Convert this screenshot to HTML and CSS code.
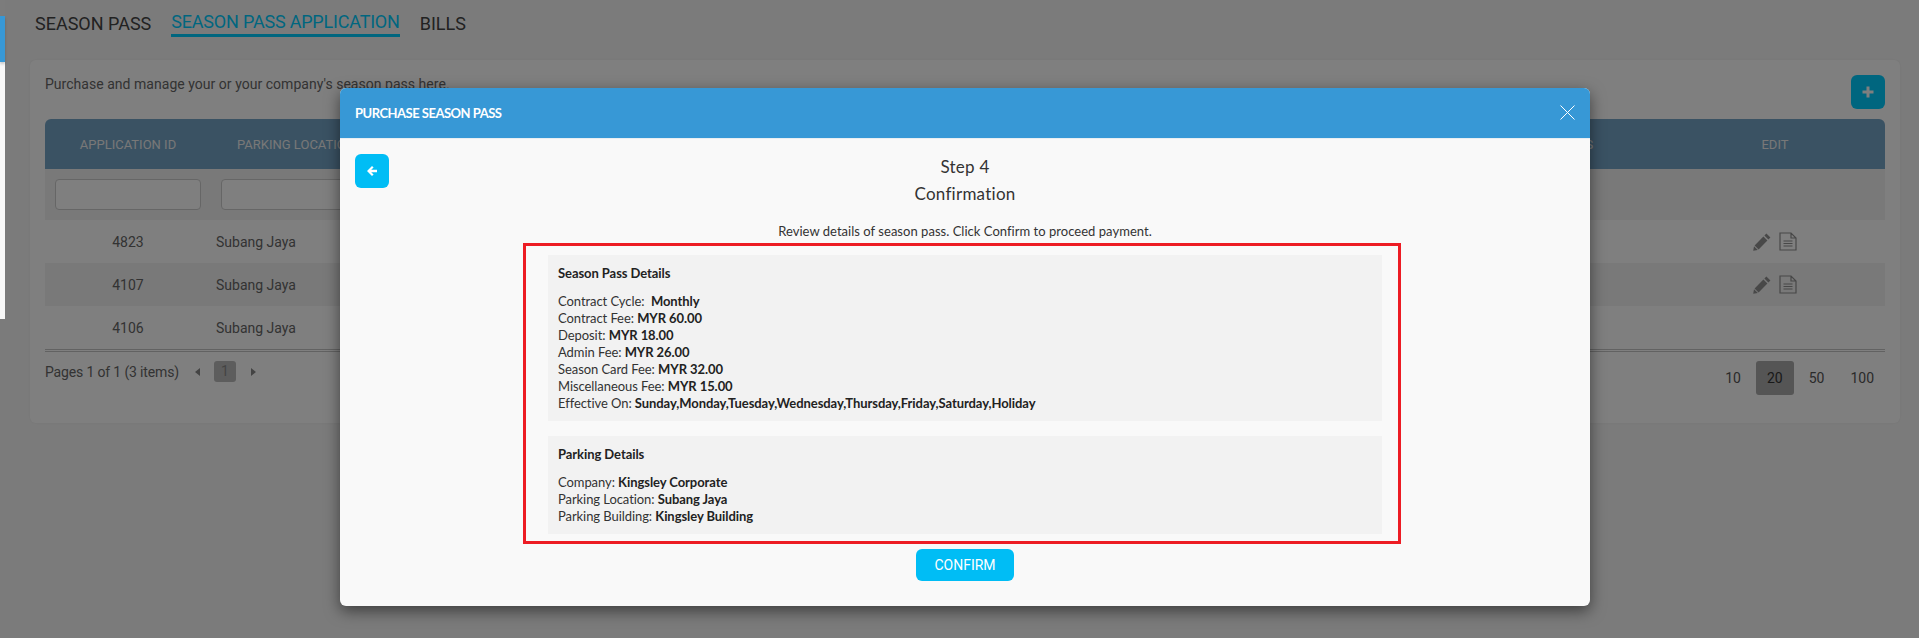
FILE: index.html
```html
<!DOCTYPE html>
<html lang="en">
<head>
<meta charset="utf-8">
<title>Season Pass Application</title>
<link rel="stylesheet" href="styles.css">
</head>
<body>
<div class="page">
  <nav class="tabs">
    <a class="tab">SEASON PASS</a>
    <a class="tab tab-active">SEASON PASS APPLICATION</a>
    <a class="tab">BILLS</a>
  </nav>
  <section class="card">
    <div class="card-top">
      <p class="intro">Purchase and manage your or your company's season pass here.</p>
      <button class="add-btn" aria-label="Add"><svg width="12" height="12" viewBox="0 0 12 12"><path d="M4.5 0.5h3v4h4v3h-4v4h-3v-4h-4v-3h4z" fill="#fff"/></svg></button>
    </div>
    <table class="grid">
      <colgroup><col class="c1"><col class="c2"><col><col class="c4"><col class="c5"></colgroup>
      <thead>
        <tr class="head"><th>APPLICATION ID</th><th>PARKING LOCATION</th><th></th><th>STATUS</th><th>EDIT</th></tr>
        <tr class="filters"><td><input class="filter"></td><td><input class="filter"></td><td></td><td></td><td></td></tr>
      </thead>
      <tbody>
        <tr><td class="num">4823</td><td>Subang Jaya</td><td></td><td></td><td class="edit">
          <svg class="ic" width="18" height="18" viewBox="0 0 18 18"><path d="M13.4 0.6l4 4-2 2-4-4zM10.4 3.6l4 4-8.8 8.8-4-4zM1 13.2l3.8 3.8-4.6 0.8z" fill="#909090"/></svg>
          <svg class="ic" width="18" height="19" viewBox="0 0 18 19"><path d="M1 1h11l5 5v12H1zM12 1v5h5M4.5 9h9M4.5 11.5h9M4.5 14h9" fill="none" stroke="#909090" stroke-width="1.2"/></svg>
        </td></tr>
        <tr class="alt"><td class="num">4107</td><td>Subang Jaya</td><td></td><td></td><td class="edit">
          <svg class="ic" width="18" height="18" viewBox="0 0 18 18"><path d="M13.4 0.6l4 4-2 2-4-4zM10.4 3.6l4 4-8.8 8.8-4-4zM1 13.2l3.8 3.8-4.6 0.8z" fill="#909090"/></svg>
          <svg class="ic" width="18" height="19" viewBox="0 0 18 19"><path d="M1 1h11l5 5v12H1zM12 1v5h5M4.5 9h9M4.5 11.5h9M4.5 14h9" fill="none" stroke="#909090" stroke-width="1.2"/></svg>
        </td></tr>
        <tr><td class="num">4106</td><td>Subang Jaya</td><td></td><td></td><td></td></tr>
      </tbody>
    </table>
    <div class="pager">
      <div class="pager-left">
        <span class="pager-info">Pages 1 of 1 (3 items)</span>
        <span class="arrow arrow-l"></span>
        <span class="page-box">1</span>
        <span class="arrow arrow-r"></span>
      </div>
      <div class="sizes">
        <span class="size">10</span>
        <span class="size size-on">20</span>
        <span class="size">50</span>
        <span class="size">100</span>
      </div>
    </div>
  </section>
</div>

<div class="overlay"></div>

<div class="edge">
  <div class="edge-dim"></div>
  <div class="edge-blue"></div>
  <div class="edge-light"></div>
</div>

<div class="modal">
  <header class="modal-head">
    <h2 class="modal-title">PURCHASE SEASON PASS</h2>
    <svg class="close" width="15" height="15" viewBox="0 0 15 15"><path d="M0.5 0.5l14 14M14.5 0.5l-14 14" stroke="#fff" stroke-width="1" fill="none"/></svg>
  </header>
  <div class="modal-body">
    <div class="step-row">
      <button class="back-btn" aria-label="Back"><svg width="12" height="12" viewBox="0 0 12 12"><path d="M6 1l1.6 1.6L5.2 4.8H11v2.4H5.2l2.4 2.2L6 11 1 6z" fill="#fff"/></svg></button>
      <div class="step-text">
        <div class="step-line">Step 4</div>
        <div class="step-line">Confirmation</div>
      </div>
      <div class="step-pad"></div>
    </div>
    <p class="review">Review details of season pass. Click Confirm to proceed payment.</p>
    <div class="redbox">
      <div class="panel">
        <h3 class="panel-title">Season Pass Details</h3>
        <div class="line">Contract Cycle:&nbsp; <b>Monthly</b></div>
        <div class="line">Contract Fee: <b>MYR 60.00</b></div>
        <div class="line">Deposit: <b>MYR 18.00</b></div>
        <div class="line">Admin Fee: <b>MYR 26.00</b></div>
        <div class="line">Season Card Fee: <b>MYR 32.00</b></div>
        <div class="line">Miscellaneous Fee: <b>MYR 15.00</b></div>
        <div class="line">Effective On: <b>Sunday,Monday,Tuesday,Wednesday,Thursday,Friday,Saturday,Holiday</b></div>
      </div>
      <div class="panel">
        <h3 class="panel-title">Parking Details</h3>
        <div class="line">Company: <b>Kingsley Corporate</b></div>
        <div class="line">Parking Location: <b>Subang Jaya</b></div>
        <div class="line">Parking Building: <b>Kingsley Building</b></div>
      </div>
    </div>
    <div class="confirm-row"><button class="confirm">CONFIRM</button></div>
  </div>
</div>
</body>
</html>
```

FILE: styles.css
```css
* { box-sizing: border-box; }
html, body { margin: 0; height: 638px; overflow: hidden; }
body { background: #f7f7f7; font-family: Roboto, "Liberation Sans", sans-serif; color: #444; position: relative; }

.page { padding: 0 19px 0 30px; }

.tabs { display: flex; gap: 20px; height: 60px; padding-left: 5px; align-items: flex-start; font-size: 18px; color: #444; }
.tab { display: block; padding-top: 14px; line-height: 20px; }
.tab-active { padding-top: 12px; padding-bottom: 2px; letter-spacing: -0.2px; color: #00cdff; border-bottom: 3px solid #00cdff; }

.card { background: #fff; border-radius: 6px; padding: 15px; height: 363px; box-shadow: 0 0 3px rgba(0,0,0,.06); }
.card-top { display: flex; justify-content: space-between; align-items: flex-start; height: 44px; }
.intro { margin: 0; font-size: 14px; line-height: 18px; letter-spacing: 0.03px; color: #666; }
.add-btn { width: 34px; height: 34px; border: 0; border-radius: 6px; background: #00cdff; display: flex; align-items: center; justify-content: center; padding: 0; }

.grid { width: 100%; table-layout: fixed; border-collapse: separate; border-spacing: 0; font-size: 14px; }
.c1 { width: 166px; }
.c2 { width: 170px; }
.c4 { width: 190px; }
.c5 { width: 220px; }
.head th { height: 50px; background: #74a4c6; color: #f0f0f0; font-weight: 400; font-size: 13px; text-align: center; padding: 0; }
.head th:first-child { border-top-left-radius: 6px; }
.head th:last-child { border-top-right-radius: 6px; }
.filters td { height: 51px; background: #f2f2f2; padding: 0 10px; }
.filter { display: block; width: 100%; height: 31px; border: 1px solid #ccc; border-radius: 4px; background: #fff; }
tbody td { height: 43px; padding: 0 5px; color: #666; }
tbody .num { text-align: center; }
tbody .edit { text-align: center; padding: 0; }
.alt td { background: #f2f2f2; }
.ic { vertical-align: middle; margin: 0 2px; }

.pager { display: flex; justify-content: space-between; align-items: flex-start; border-top: 3px double #c4c4c4; padding-top: 9px; }
.pager-left { display: flex; align-items: center; font-size: 14px; height: 21px; color: #666; }
.pager-info { width: 133px; white-space: nowrap; letter-spacing: -0.15px; }
.arrow { width: 0; height: 0; border-top: 4px solid transparent; border-bottom: 4px solid transparent; }
.arrow-l { margin-left: 17px; margin-right: 14px; border-right: 5px solid #888; }
.arrow-r { margin-left: 15px; border-left: 5px solid #888; }
.page-box { width: 22px; height: 21px; background: #bbb; border-radius: 3px; text-align: center; line-height: 21px; color: #888; }
.sizes { display: flex; gap: 4px; font-size: 14px; }
.size { height: 34px; padding: 0 11px; line-height: 34px; color: #555; }
.size-on { background: #aaa; border-radius: 3px; color: #333; }

.overlay { position: absolute; inset: 0; background: rgba(0,0,0,.5); }

.edge { position: absolute; left: 0; top: 0; bottom: 0; width: 5px; display: flex; flex-direction: column; }
.edge-dim { height: 16px; background: #7c7c7c; }
.edge-blue { height: 46px; background: #3798d6; box-shadow: 0 2px 3px rgba(0,0,0,.2); position: relative; }
.edge-light { height: 257px; background: #f8f8f8; }

.modal { position: absolute; left: 340px; top: 88px; width: 1250px; background: #f9f9f9; border-radius: 6px; box-shadow: 0 5px 15px rgba(0,0,0,.5); font-family: Lato, "Open Sans", sans-serif; }
.modal-head { height: 51px; background: #3798d6; border-bottom: 1px solid #e8eef2; border-radius: 6px 6px 0 0; display: flex; justify-content: space-between; align-items: center; padding: 0 15px; }
.modal-title { margin: 0; color: #fff; font-size: 13px; font-weight: 700; letter-spacing: -0.5px; line-height: 48px; }
.close { margin-bottom: 2px; }
.modal-body { padding: 15px 15px 25px; }
.step-row { display: grid; grid-template-columns: 34px 1fr 34px; }
.back-btn { width: 34px; height: 34px; border: 0; padding: 0; border-radius: 6px; background: #00bdf5; display: flex; align-items: center; justify-content: center; }
.step-text { text-align: center; margin-top: -1px; margin-bottom: 1px; }
.step-line { font-size: 17px; line-height: 27px; letter-spacing: 0.25px; color: #333; }
.review { margin: 14px 0 3px; text-align: center; font-size: 13px; line-height: 18px; letter-spacing: 0.03px; color: #333; }
.redbox { width: 878px; margin-left: 168px; border: 3px solid #ed1c24; padding: 9px 16px 7px 22px; display: flex; flex-direction: column; gap: 15px; }
.panel { background: #f2f2f2; padding: 10px 10px 9px; font-size: 13px; line-height: 17px; letter-spacing: -0.07px; color: #333; }
.panel-title { margin: 0 0 11px; font-size: 13px; line-height: 17px; font-weight: 700; color: #222; }
.line b { font-weight: 700; color: #222; }
.confirm-row { display: flex; justify-content: center; margin-top: 5px; }
.confirm { width: 98px; height: 32px; border: 0; border-radius: 6px; background: #00bdf5; color: #fff; font-family: Roboto, sans-serif; font-size: 14px; padding: 0; }
```
